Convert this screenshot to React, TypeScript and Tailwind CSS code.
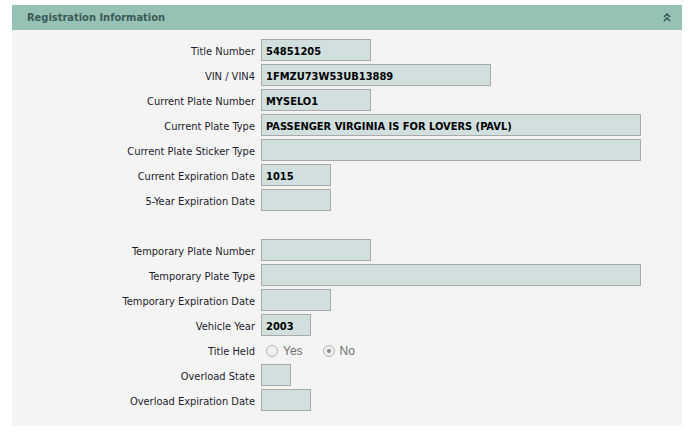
import React from "react";

type Row =
  | { kind: "input"; label: string; value?: string; width: number }
  | { kind: "spacer" }
  | { kind: "radio"; label: string };

const rows: Row[] = [
  { kind: "input", label: "Title Number", value: "54851205", width: 110 },
  { kind: "input", label: "VIN / VIN4", value: "1FMZU73W53UB13889", width: 230 },
  { kind: "input", label: "Current Plate Number", value: "MYSELO1", width: 110 },
  { kind: "input", label: "Current Plate Type", value: "PASSENGER VIRGINIA IS FOR LOVERS (PAVL)", width: 380 },
  { kind: "input", label: "Current Plate Sticker Type", width: 380 },
  { kind: "input", label: "Current Expiration Date", value: "1015", width: 70 },
  { kind: "input", label: "5-Year Expiration Date", width: 70 },
  { kind: "spacer" },
  { kind: "input", label: "Temporary Plate Number", width: 110 },
  { kind: "input", label: "Temporary Plate Type", width: 380 },
  { kind: "input", label: "Temporary Expiration Date", width: 70 },
  { kind: "input", label: "Vehicle Year", value: "2003", width: 50 },
  { kind: "radio", label: "Title Held" },
  { kind: "input", label: "Overload State", width: 30 },
  { kind: "input", label: "Overload Expiration Date", width: 50 },
];

const Radio: React.FC<{ checked?: boolean; label: string }> = ({ checked, label }) => (
  <label className="flex items-center gap-[5px]">
    <span className="flex h-[12px] w-[12px] items-center justify-center rounded-full border border-[#b4b4b4] bg-[#f0f0f0]">
      {checked && <span className="h-[4px] w-[4px] rounded-full bg-[#8a8a8a]" />}
    </span>
    <span className="text-[#707070]">{label}</span>
  </label>
);

export default function App() {
  return (
    <div className="min-h-[435px] bg-white pt-[5px] text-[11px] font-['DejaVu_Sans_Condensed','DejaVu_Sans',sans-serif]">
      <div className="mx-[12px] w-[670px]">
        <div className="flex h-[25px] items-center justify-between bg-[#96c1b5] pl-[15px] pr-[11px]">
          <span className="pt-[1px] font-bold text-[#3c5a56]">Registration Information</span>
          <svg width="8" height="9" viewBox="0 0 8 9" className="text-[#2f4d49]">
            <path d="M1 4 L4 1 L7 4 M1 8 L4 5 L7 8" fill="none" stroke="currentColor" strokeWidth="1.5" />
          </svg>
        </div>
        <div className="bg-[#f4f4f4] pb-[12px] pt-[9px]">
          {rows.map((row, i) => {
            if (row.kind === "spacer") return <div key={i} className="h-[25px]" />;
            return (
              <div key={i} className="flex h-[25px] items-start">
                <div className="flex h-[22px] w-[249px] shrink-0 items-center justify-end pr-[6px] pt-[4px] text-[#1c1c2a]">
                  {row.label}
                </div>
                {row.kind === "input" ? (
                  <div
                    className="flex h-[22px] items-center border border-[#a9a9a9] bg-[#d1e0df] pl-[4px] pt-[4px] font-bold text-black"
                    style={{ width: row.width }}
                  >
                    {row.value}
                  </div>
                ) : (
                  <div className="flex h-[22px] items-center gap-[20px] pl-[5px] pt-[2px] font-['Liberation_Sans',Arial,sans-serif] text-[12px]">
                    <Radio label="Yes" />
                    <Radio label="No" checked />
                  </div>
                )}
              </div>
            );
          })}
        </div>
      </div>
    </div>
  );
}
